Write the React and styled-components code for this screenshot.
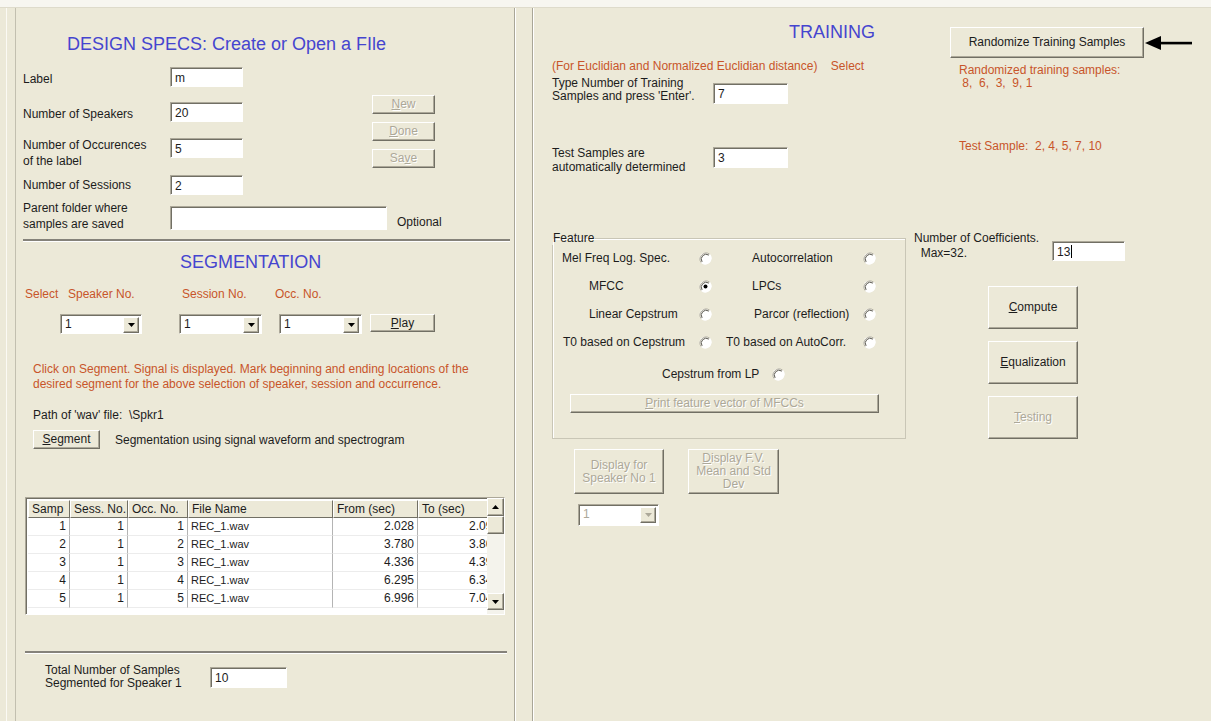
import React from 'react';
import styled, { createGlobalStyle, css } from 'styled-components';

const GlobalStyle = createGlobalStyle`
  html, body {
    margin: 0;
    padding: 0;
  }
  body {
    background: #ece9d8;
    font-family: "Liberation Sans", Arial, sans-serif;
    font-size: 12px;
    color: #1c1c1c;
    overflow: hidden;
  }
`;

// classic 3D edges
const raised = css`
  border-top: 1px solid #ffffff;
  border-left: 1px solid #ffffff;
  border-right: 1px solid #716f64;
  border-bottom: 1px solid #716f64;
  box-shadow: inset -1px -1px 0 #aca899;
`;

const sunken = css`
  border-top: 1px solid #aca899;
  border-left: 1px solid #aca899;
  border-right: 1px solid #ffffff;
  border-bottom: 1px solid #ffffff;
  box-shadow: inset 1px 1px 0 #716f64;
`;

const Window = styled.div`
  width: 1211px;
  height: 721px;
  display: flex;
  flex-direction: column;
  overflow: hidden;
`;

const TopStrip = styled.div`
  height: 7px;
  background: #f7f6f0;
  border-bottom: 1px solid #dedbcb;
`;

const Panels = styled.div`
  flex: 1;
  display: flex;
  background: linear-gradient(#fbfaf4, #fbfaf4) 6px 0 / 1px 100% no-repeat, #ece9d8;
`;

const LeftPanel = styled.div`
  margin-left: 15px;
  width: 500px;
  box-sizing: border-box;
  padding-left: 7px;
  border-left: 1px solid #c2bfaf;
  border-right: 1px solid #a9a697;
  box-shadow: 1px 0 0 #ffffff;
  display: flex;
  flex-direction: column;
`;

const RightPanel = styled.div`
  margin-left: 17px;
  flex: 1;
  padding-left: 19px;
  border-left: 1px solid #a9a697;
  box-shadow: inset 1px 0 0 #ffffff;
  display: flex;
  flex-direction: column;
`;

const Heading = styled.div`
  margin-top: ${p => p.$mt}px;
  margin-left: ${p => p.$ml}px;
  font-size: 18px;
  line-height: 21px;
  color: #4545cf;
  white-space: nowrap;
`;

const Note = styled.div`
  margin-top: ${p => p.$mt || 0}px;
  margin-left: ${p => p.$ml || 0}px;
  line-height: ${p => p.$lh || 15}px;
  color: ${p => (p.$tone === 'orange' ? '#c8552a' : '#1c1c1c')};
  white-space: nowrap;
`;

const TextBox = styled.div`
  width: ${p => p.$w}px;
  height: ${p => p.$h || 20}px;
  margin-top: ${p => p.$mt || 0}px;
  box-sizing: border-box;
  ${sunken};
  background: #ffffff;
  padding: 3px 0 0 4px;
  line-height: 14px;
  display: flex;
  align-items: flex-start;
  flex-shrink: 0;
`;

const Caret = styled.span`
  display: inline-block;
  width: 1px;
  height: 13px;
  background: #000;
  margin-left: 1px;
`;

const Button = styled.button`
  width: ${p => p.$w}px;
  height: ${p => p.$h}px;
  margin-left: ${p => p.$ml || 0}px;
  margin-top: ${p => p.$mt || 0}px;
  box-sizing: border-box;
  padding: 0;
  background: #ece9d8;
  ${raised};
  font-family: inherit;
  font-size: 12px;
  line-height: 13px;
  text-align: center;
  flex-shrink: 0;
  color: ${p => (p.disabled ? '#aca899' : '#1c1c1c')};
  text-shadow: ${p => (p.disabled ? '1px 1px 0 #ffffff' : 'none')};
`;

/* design specs */

const SpecsBlock = styled.div`
  display: flex;
  margin-top: 12px;
`;

const FieldsCol = styled.div`
  display: flex;
  flex-direction: column;
`;

const FieldRow = styled.div`
  display: flex;
  align-items: flex-start;
  height: ${p => p.$h}px;
`;

const FieldLabel = styled.div`
  width: ${p => p.$w || 147}px;
  margin-top: ${p => p.$mt || 0}px;
  padding-left: ${p => p.$pl || 0}px;
  box-sizing: border-box;
  line-height: ${p => p.$lh || 16}px;
  white-space: nowrap;
  flex-shrink: 0;
`;

const SideButtons = styled.div`
  display: flex;
  flex-direction: column;
  gap: 8px;
  margin-left: 129px;
  margin-top: 28px;
`;

const ParentRow = styled.div`
  display: flex;
  align-items: flex-start;
`;

const Optional = styled.span`
  margin-left: 10px;
  margin-top: 12px;
`;

const Divider = styled.div`
  width: ${p => p.$w}px;
  margin-top: ${p => p.$mt}px;
  margin-left: ${p => p.$ml || 0}px;
  border-top: 2px solid #85827a;
  border-bottom: 1px solid #ffffff;
`;

/* segmentation */

const SelectRow = styled.div`
  display: grid;
  grid-template-columns: 43px 114px 93px auto;
  padding-left: 2px;
  margin-top: 14px;
  line-height: 15px;
  color: #c8552a;
`;

const ComboRow = styled.div`
  display: flex;
  align-items: flex-start;
  margin-top: 12px;
`;

const Combo = styled.div`
  width: ${p => p.$w}px;
  height: ${p => p.$h || 20}px;
  margin-left: ${p => p.$ml || 0}px;
  margin-top: ${p => p.$mt || 0}px;
  box-sizing: border-box;
  ${sunken};
  background: #ffffff;
  display: flex;
  align-items: stretch;
  padding: 2px;
  flex-shrink: 0;
`;

const ComboText = styled.span`
  flex: 1;
  padding-left: 2px;
  line-height: 14px;
  color: ${p => (p.$disabled ? '#aca899' : '#1c1c1c')};
`;

const ArrowButton = styled.div`
  width: ${p => p.$w || 16}px;
  height: ${p => p.$h || 16}px;
  box-sizing: border-box;
  background: #ece9d8;
  ${raised};
  display: flex;
  align-items: center;
  justify-content: center;
  flex-shrink: 0;
`;

const SegmentRow = styled.div`
  display: flex;
  align-items: center;
  margin-top: 7px;
  margin-left: 10px;
`;

const SegmentHint = styled.span`
  margin-left: 15px;
`;

/* samples table */

const Table = styled.div`
  margin-top: 48px;
  margin-left: 2px;
  width: 480px;
  height: 118px;
  box-sizing: border-box;
  ${sunken};
  background: #ffffff;
  display: flex;
  padding: 2px 0 0 2px;
`;

const TableGrid = styled.div`
  flex: 1;
  overflow: hidden;
  display: grid;
  grid-template-columns: 42px 58px 60px 145px 85px 85px;
  grid-auto-rows: 18px;
  align-content: start;
`;

const HeadCell = styled.div`
  box-sizing: border-box;
  background: #ece9d8;
  ${raised};
  box-shadow: none;
  padding: 0 3px;
  line-height: 16px;
  white-space: nowrap;
  overflow: hidden;
`;

const Cell = styled.div`
  box-sizing: border-box;
  border-right: 1px solid #b4b4b4;
  border-bottom: 1px solid #ececec;
  padding: 0 3px;
  line-height: 17px;
  white-space: nowrap;
  text-align: ${p => (p.$left ? 'left' : 'right')};
  font-size: ${p => (p.$left ? 11 : 12)}px;
`;

const ScrollBar = styled.div`
  width: 17px;
  display: flex;
  flex-direction: column;
  margin-top: -2px;
`;

const ScrollTrack = styled.div`
  flex: ${p => (p.$tail ? '0 0 4px' : '1')};
  background: #f4f3ec;
`;

const ScrollThumb = styled.div`
  height: 18px;
  box-sizing: border-box;
  background: #ece9d8;
  ${raised};
`;

const TotalRow = styled.div`
  display: flex;
  align-items: center;
  margin-top: 10px;
`;

/* training */

const TopArea = styled.div`
  display: flex;
  align-items: flex-start;
`;

const TopLeft = styled.div`
  width: 387px;
  display: flex;
  flex-direction: column;
`;

const TopRight = styled.div`
  margin-left: 11px;
  margin-top: 19px;
  display: flex;
  flex-direction: column;
`;

const InputRow = styled.div`
  display: flex;
  align-items: ${p => p.$align || 'flex-start'};
  margin-top: ${p => p.$mt}px;
`;

const ButtonWithPointer = styled.div`
  display: flex;
  align-items: center;
`;

const LowerArea = styled.div`
  display: flex;
  align-items: flex-start;
  margin-top: 57px;
`;

const LowerLeft = styled.div`
  width: 354px;
  display: flex;
  flex-direction: column;
`;

const FeatureBox = styled.fieldset`
  margin: 0;
  width: 354px;
  box-sizing: border-box;
  padding: 0 0 25px 9px;
  border: 1px solid #c9c6b6;
  box-shadow: inset 1px 1px 0 #ffffff;
  display: flex;
  flex-direction: column;
  gap: 2px;
`;

const Legend = styled.legend`
  padding: 0 1px;
  margin-left: -10px;
  line-height: 14px;
`;

const RadioRow = styled.div`
  display: flex;
  height: 26px;
  margin-top: ${p => p.$mt || 0}px;
`;

const RadioCell = styled.label`
  width: ${p => p.$w || 150}px;
  margin-left: ${p => p.$ml || 0}px;
  display: flex;
  align-items: center;
  white-space: nowrap;
`;

const RadioText = styled.span`
  padding-left: ${p => p.$indent}px;
`;

const RadioMark = styled.span`
  margin-left: auto;
  display: flex;
`;

const DisplayRow = styled.div`
  display: flex;
  margin-top: 10px;
`;

const LowerRight = styled.div`
  margin-left: 8px;
  display: flex;
  flex-direction: column;
`;

const CoefRow = styled.div`
  display: flex;
  align-items: flex-start;
`;

const ActionButtons = styled.div`
  display: flex;
  flex-direction: column;
  gap: 12px;
  margin-left: 74px;
  margin-top: 25px;
`;

const Tri = ({ up, color = '#000' }) => (
  <svg width="7" height="4" viewBox="0 0 7 4">
    <polygon points={up ? '0,4 7,4 3.5,0' : '0,0 7,0 3.5,4'} fill={color} />
  </svg>
);

const Radio = ({ checked }) => (
  <svg width="13" height="13" viewBox="0 0 13 13">
    <circle cx="6.5" cy="6.5" r="6" fill="#ffffff" />
    <path d="M2.3 10.7 A6 6 0 0 1 10.7 2.3" stroke="#aca899" fill="none" />
    <path d="M3.1 9.9 A4.9 4.9 0 0 1 9.9 3.1" stroke="#5a584e" fill="none" />
    <path d="M10.7 2.3 A6 6 0 0 1 2.3 10.7" stroke="#ffffff" fill="none" />
    {checked && <circle cx="6.5" cy="6.5" r="2" fill="#000" />}
  </svg>
);

const Pointer = () => (
  <svg width="48" height="16" viewBox="0 0 48 16" style={{ marginLeft: 1 }}>
    <polygon points="0,8 16,1 16,15" fill="#000" />
    <rect x="14" y="6.8" width="33" height="2.6" fill="#000" />
  </svg>
);

const DropDown = ({ w, h, ml, mt, value, disabled }) => (
  <Combo $w={w} $h={h} $ml={ml} $mt={mt}>
    <ComboText $disabled={disabled}>{value}</ComboText>
    <ArrowButton>
      <Tri color={disabled ? '#aca899' : '#000'} />
    </ArrowButton>
  </Combo>
);

const samples = [
  ['1', '1', '1', 'REC_1.wav', '2.028', '2.095'],
  ['2', '1', '2', 'REC_1.wav', '3.780', '3.862'],
  ['3', '1', '3', 'REC_1.wav', '4.336', '4.391'],
  ['4', '1', '4', 'REC_1.wav', '6.295', '6.347'],
  ['5', '1', '5', 'REC_1.wav', '6.996', '7.041'],
];

const columns = ['Samp', 'Sess. No.', 'Occ. No.', 'File Name', 'From (sec)', 'To (sec)'];

const featureRows = [
  [
    { text: 'Mel Freq Log. Spec.', indent: 0 },
    { text: 'Autocorrelation', indent: 26 },
  ],
  [
    { text: 'MFCC', indent: 27, checked: true },
    { text: 'LPCs', indent: 26 },
  ],
  [
    { text: 'Linear Cepstrum', indent: 27 },
    { text: 'Parcor (reflection)', indent: 28 },
  ],
  [
    { text: 'T0 based on Cepstrum', indent: 1 },
    { text: 'T0 based on AutoCorr.', indent: 0 },
  ],
];

const DesignSpecs = () => (
  <>
    <Heading $mt={26} $ml={44}>DESIGN SPECS: Create or Open a FIle</Heading>
    <SpecsBlock>
      <FieldsCol>
        <FieldRow $h={35}>
          <FieldLabel $mt={4}>Label</FieldLabel>
          <TextBox $w={73}>m</TextBox>
        </FieldRow>
        <FieldRow $h={36}>
          <FieldLabel $mt={4}>Number of Speakers</FieldLabel>
          <TextBox $w={73}>20</TextBox>
        </FieldRow>
        <FieldRow $h={37}>
          <FieldLabel $mt={-1}>
            Number of Occurences
            <br />
            of the label
          </FieldLabel>
          <TextBox $w={73}>5</TextBox>
        </FieldRow>
        <FieldRow $h={28}>
          <FieldLabel $mt={2}>Number of Sessions</FieldLabel>
          <TextBox $w={73}>2</TextBox>
        </FieldRow>
      </FieldsCol>
      <SideButtons>
        <Button $w={63} $h={19} disabled>
          <u>N</u>ew
        </Button>
        <Button $w={63} $h={19} disabled>
          <u>D</u>one
        </Button>
        <Button $w={63} $h={19} disabled>
          Sa<u>v</u>e
        </Button>
      </SideButtons>
    </SpecsBlock>
    <ParentRow>
      <FieldLabel $mt={-3}>
        Parent folder where
        <br />
        samples are saved
      </FieldLabel>
      <TextBox $w={217} $h={24} $mt={3} />
      <Optional>Optional</Optional>
    </ParentRow>
  </>
);

const Segmentation = () => (
  <>
    <Divider $w={487} $mt={7} />
    <Heading $mt={10} $ml={157}>SEGMENTATION</Heading>
    <SelectRow>
      <span>Select</span>
      <span>Speaker No.</span>
      <span>Session No.</span>
      <span>Occ. No.</span>
    </SelectRow>
    <ComboRow>
      <DropDown w={82} ml={37} value="1" />
      <DropDown w={83} ml={37} value="1" />
      <DropDown w={83} ml={17} value="1" />
      <Button $w={65} $h={18} $ml={8}>
        <u>P</u>lay
      </Button>
    </ComboRow>
    <Note $tone="orange" $mt={28} $ml={10}>
      Click on Segment. Signal is displayed. Mark beginning and ending locations of the
      <br />
      desired segment for the above selection of speaker, session and occurrence.
    </Note>
    <Note $mt={16} $ml={10}>Path of &#39;wav&#39; file:&nbsp; \Spkr1</Note>
    <SegmentRow>
      <Button $w={67} $h={19}>
        <u>S</u>egment
      </Button>
      <SegmentHint>Segmentation using signal waveform and spectrogram</SegmentHint>
    </SegmentRow>
    <Table>
      <TableGrid>
        {columns.map(c => (
          <HeadCell key={c}>{c}</HeadCell>
        ))}
        {samples.map(row =>
          row.map((v, i) => (
            <Cell key={row[0] + '-' + i} $left={i === 3}>
              {v}
            </Cell>
          ))
        )}
      </TableGrid>
      <ScrollBar>
        <ArrowButton $w={17} $h={18}>
          <Tri up />
        </ArrowButton>
        <ScrollThumb />
        <ScrollTrack />
        <ArrowButton $w={17} $h={17}>
          <Tri />
        </ArrowButton>
        <ScrollTrack $tail />
      </ScrollBar>
    </Table>
    <Divider $w={482} $mt={36} $ml={2} />
    <TotalRow>
      <FieldLabel $w={187} $pl={22} $lh={13}>
        Total Number of Samples
        <br />
        Segmented for Speaker 1
      </FieldLabel>
      <TextBox $w={77} $h={21}>10</TextBox>
    </TotalRow>
  </>
);

const Training = () => (
  <>
    <TopArea>
      <TopLeft>
        <Heading $mt={14} $ml={237}>TRAINING</Heading>
        <Note $tone="orange" $mt={16}>
          (For Euclidian and Normalized Euclidian distance)&nbsp;&nbsp;&nbsp; Select
        </Note>
        <InputRow $mt={9}>
          <FieldLabel $w={161} $lh={13} $mt={-6}>
            Type Number of Training
            <br />
            Samples and press &#39;Enter&#39;.
          </FieldLabel>
          <TextBox $w={75} $h={21}>7</TextBox>
        </InputRow>
        <InputRow $mt={36} $align="center">
          <FieldLabel $w={161} $lh={14} $mt={6}>
            Test Samples are
            <br />
            automatically determined
          </FieldLabel>
          <TextBox $w={75} $h={21}>3</TextBox>
        </InputRow>
      </TopLeft>
      <TopRight>
        <ButtonWithPointer>
          <Button $w={194} $h={31}>Randomize Training Samples</Button>
          <Pointer />
        </ButtonWithPointer>
        <Note $tone="orange" $mt={6} $ml={9} $lh={13}>
          Randomized training samples:
          <br />
          &nbsp;8,&nbsp; 6,&nbsp; 3,&nbsp; 9, 1
        </Note>
        <Note $tone="orange" $mt={50} $ml={9} $lh={13}>
          Test Sample:&nbsp; 2, 4, 5, 7, 10
        </Note>
      </TopRight>
    </TopArea>
    <LowerArea>
      <LowerLeft>
        <FeatureBox>
          <Legend>Feature</Legend>
          {featureRows.map((pair, r) => (
            <RadioRow key={r}>
              {pair.map((opt, c) => (
                <RadioCell key={opt.text} $ml={c === 1 ? 14 : 0}>
                  <RadioText $indent={opt.indent}>{opt.text}</RadioText>
                  <RadioMark>
                    <Radio checked={opt.checked} />
                  </RadioMark>
                </RadioCell>
              ))}
            </RadioRow>
          ))}
          <RadioRow $mt={4}>
            <RadioCell $ml={100} $w={123}>
              <RadioText $indent={0}>Cepstrum from LP</RadioText>
              <RadioMark>
                <Radio />
              </RadioMark>
            </RadioCell>
          </RadioRow>
          <Button $w={309} $h={19} $ml={8} $mt={5} disabled>
            <u>P</u>rint feature vector of MFCCs
          </Button>
        </FeatureBox>
        <DisplayRow>
          <Button $w={90} $h={45} $ml={22} disabled>
            Display for
            <br />
            Speaker No 1
          </Button>
          <Button $w={91} $h={45} $ml={24} disabled>
            <u>D</u>isplay F.V.
            <br />
            Mean and Std
            <br />
            Dev
          </Button>
        </DisplayRow>
        <DropDown w={81} h={22} ml={26} mt={10} value="1" disabled />
      </LowerLeft>
      <LowerRight>
        <CoefRow>
          <FieldLabel $w={138} $lh={15}>
            Number of Coefficients.
            <br />
            &nbsp;&nbsp;Max=32.
          </FieldLabel>
          <TextBox $w={73} $h={20} $mt={10}>
            13
            <Caret />
          </TextBox>
        </CoefRow>
        <ActionButtons>
          <Button $w={90} $h={43}>
            <u>C</u>ompute
          </Button>
          <Button $w={90} $h={43}>
            <u>E</u>qualization
          </Button>
          <Button $w={90} $h={43} disabled>
            <u>T</u>esting
          </Button>
        </ActionButtons>
      </LowerRight>
    </LowerArea>
  </>
);

export default function App() {
  return (
    <>
      <GlobalStyle />
      <Window>
        <TopStrip />
        <Panels>
          <LeftPanel>
            <DesignSpecs />
            <Segmentation />
          </LeftPanel>
          <RightPanel>
            <Training />
          </RightPanel>
        </Panels>
      </Window>
    </>
  );
}
